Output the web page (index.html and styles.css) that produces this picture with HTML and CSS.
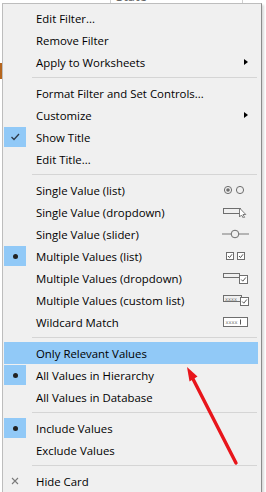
FILE: index.html
```html
<!DOCTYPE html>
<html lang="en">
<head>
    <title>filter menu</title>
    <link rel="stylesheet" href="styles.css">
</head>
<body>
    <div class="page">
        <div class="card-head">
            <span class="field">State</span>
            <span class="close">&times;</span>
        </div>
        <div class="edge"></div>

        <div class="menu">
            <div class="item"><span class="gutter"></span><span class="label">Edit Filter...</span><span class="aux"></span></div>
            <div class="item"><span class="gutter"></span><span class="label">Remove Filter</span><span class="aux"></span></div>
            <div class="item"><span class="gutter"></span><span class="label">Apply to Worksheets</span><span class="aux"><span class="sub"></span></span></div>
            <div class="sep"></div>

            <div class="item"><span class="gutter"></span><span class="label">Format Filter and Set Controls...</span><span class="aux"></span></div>
            <div class="item"><span class="gutter"></span><span class="label">Customize</span><span class="aux"><span class="sub"></span></span></div>
            <div class="item">
                <span class="gutter on">
                    <svg width="22" height="20" viewBox="0 0 22 20"><polyline points="7.5,10 10,12.5 15,7" fill="none" stroke="#2d3b4b" stroke-width="1.3"/></svg>
                </span>
                <span class="label">Show Title</span><span class="aux"></span>
            </div>
            <div class="item"><span class="gutter"></span><span class="label">Edit Title...</span><span class="aux"></span></div>
            <div class="sep"></div>

            <div class="item">
                <span class="gutter"></span><span class="label">Single Value (list)</span>
                <span class="aux">
                    <svg width="28" height="12" viewBox="0 0 28 12">
                        <circle cx="6" cy="6" r="3.6" fill="none" stroke="#6e6e6e"/>
                        <circle cx="6" cy="6" r="1.8" fill="#6e6e6e"/>
                        <circle cx="18" cy="6" r="3.6" fill="none" stroke="#6e6e6e"/>
                    </svg>
                </span>
            </div>
            <div class="item">
                <span class="gutter"></span><span class="label">Single Value (dropdown)</span>
                <span class="aux">
                    <svg width="28" height="12" viewBox="0 0 28 12">
                        <rect x="1.5" y="2.5" width="17" height="5" fill="none" stroke="#6e6e6e"/>
                        <polygon points="17.5,2 17.5,11 19.5,9 21.3,12 22.6,11.3 21,8.5 23.8,8.5" fill="#fff" stroke="#6e6e6e" stroke-width="0.9"/>
                    </svg>
                </span>
            </div>
            <div class="item">
                <span class="gutter"></span><span class="label">Single Value (slider)</span>
                <span class="aux">
                    <svg width="28" height="12" viewBox="0 0 28 12">
                        <line x1="0" y1="6" x2="27" y2="6" stroke="#b4b4b4" stroke-width="2"/>
                        <circle cx="13" cy="6" r="3.8" fill="#f0f0f0" stroke="#6e6e6e"/>
                    </svg>
                </span>
            </div>
            <div class="item">
                <span class="gutter on"><span class="dot"></span></span>
                <span class="label">Multiple Values (list)</span>
                <span class="aux">
                    <svg width="28" height="12" viewBox="0 0 28 12">
                        <rect x="4.5" y="2.5" width="7" height="7" fill="#fff" stroke="#6e6e6e"/>
                        <polyline points="6,6 7.5,7.6 10,4.3" fill="none" stroke="#555"/>
                        <rect x="15.5" y="2.5" width="7" height="7" fill="#fff" stroke="#6e6e6e"/>
                        <polyline points="17,6 18.5,7.6 21,4.3" fill="none" stroke="#555"/>
                    </svg>
                </span>
            </div>
            <div class="item">
                <span class="gutter"></span><span class="label">Multiple Values (dropdown)</span>
                <span class="aux">
                    <svg width="28" height="12" viewBox="0 0 28 12">
                        <rect x="1.5" y="1.5" width="16" height="4" fill="none" stroke="#6e6e6e"/>
                        <rect x="17.5" y="3.5" width="8" height="8" fill="#fff" stroke="#6e6e6e"/>
                        <polyline points="19.2,7.5 20.8,9.2 23.8,5.5" fill="none" stroke="#555"/>
                    </svg>
                </span>
            </div>
            <div class="item">
                <span class="gutter"></span><span class="label">Multiple Values (custom list)</span>
                <span class="aux">
                    <svg width="28" height="12" viewBox="0 0 28 12">
                        <rect x="1.5" y="1.5" width="18" height="6" fill="none" stroke="#6e6e6e"/>
                        <text x="3" y="6.5" font-size="5" font-family="DejaVu Sans" fill="#777">xxxx</text>
                        <rect x="18.5" y="3.5" width="8" height="8" fill="#fff" stroke="#6e6e6e"/>
                        <polyline points="20.2,7.5 21.8,9.2 24.8,5.5" fill="none" stroke="#555"/>
                    </svg>
                </span>
            </div>
            <div class="item">
                <span class="gutter"></span><span class="label">Wildcard Match</span>
                <span class="aux">
                    <svg width="28" height="12" viewBox="0 0 28 12">
                        <rect x="1.5" y="1.5" width="24" height="9" fill="#fff" stroke="#6e6e6e"/>
                        <text x="3.5" y="8" font-size="5" font-family="DejaVu Sans" fill="#777">xxxx</text>
                        <line x1="18.5" y1="3.5" x2="18.5" y2="8.5" stroke="#555"/>
                    </svg>
                </span>
            </div>
            <div class="sep"></div>

            <div class="item hot"><span class="gutter"></span><span class="label">Only Relevant Values</span><span class="aux"></span></div>
            <div class="item"><span class="gutter on"><span class="dot"></span></span><span class="label">All Values in Hierarchy</span><span class="aux"></span></div>
            <div class="item"><span class="gutter"></span><span class="label">All Values in Database</span><span class="aux"></span></div>
            <div class="sep"></div>

            <div class="item"><span class="gutter on"><span class="dot"></span></span><span class="label">Include Values</span><span class="aux"></span></div>
            <div class="item"><span class="gutter"></span><span class="label">Exclude Values</span><span class="aux"></span></div>
            <div class="sep"></div>

            <div class="item">
                <span class="gutter">
                    <svg width="22" height="20" viewBox="0 0 22 20"><path d="M8 7 L14 13 M14 7 L8 13" stroke="#7a7a7a" stroke-width="1.1"/></svg>
                </span>
                <span class="label">Hide Card</span><span class="aux"></span>
            </div>
        </div>

        <!-- red annotation arrow drawn over the menu -->
        <svg class="arrow" width="266" height="492" viewBox="0 0 266 492">
            <line x1="236" y1="463" x2="192" y2="377" stroke="#e8151b" stroke-width="3.4" stroke-linecap="round"/>
            <polygon points="187,367 197.5,376.5 189.5,381.5" fill="#e8151b"/>
        </svg>
    </div>
</body>
</html>
```

FILE: styles.css
```css
*{
    margin: 0;
    padding: 0;
    box-sizing: border-box;
}
body{
    background-color: #ffffff;
    font-family: 'Open Sans', 'Noto Sans', sans-serif;
    font-size: 11.4px;
    color: #000;
}

.page{
    position: relative;
    width: 266px;
    height: 492px;
    overflow: hidden;
}

/* filter card peeking above the menu */
.card-head{
    height: 3px;
    overflow: hidden;
    display: flex;
    color: #666;
}
.field{
    margin-left: 110px;
    padding-left: 5px;
    width: 133px;
    border-left: 1px solid #cfcfcf;
    border-right: 1px solid #cfcfcf;
    font-size: 13px;
    line-height: 13px;
    margin-top: -10px;
}
.close{
    margin-left: -24px;
    color: #d64545;
    font-size: 12px;
    line-height: 12px;
    margin-top: -10px;
}
.edge{
    position: absolute;
    left: 0;
    top: 63px;
    width: 2px;
    height: 16px;
    background-color: #b5651d;
}

.menu{
    width: 260px;
    margin-left: 2px;
    background-color: #f0f0f0;
    border: 1px solid #bdbdbd;
    border-right-color: #8c8c8c;
    padding: 3px 3px 3px 1px;
    box-shadow: 2px 2px 2px rgba(0, 0, 0, 0.15);
}

.item{
    display: grid;
    grid-template-columns: 24px 1fr 28px;
    align-items: center;
    height: 22px;
    padding-right: 8px;
}
.item.hot{
    background-color: #91c9f7;
}
.gutter{
    width: 22px;
    height: 20px;
    display: flex;
    justify-content: center;
    align-items: center;
}
.gutter.on{
    background-color: #91c9f7;
}
.gutter svg{
    display: block;
}
.dot{
    width: 5px;
    height: 5px;
    border-radius: 50%;
    background-color: #222;
}
.label{
    padding-left: 8px;
    white-space: nowrap;
}
.aux{
    display: flex;
    align-items: center;
    height: 12px;
}
.aux svg{
    display: block;
}
.sub{
    margin-left: 22px;
    width: 0;
    height: 0;
    border-top: 3.5px solid transparent;
    border-bottom: 3.5px solid transparent;
    border-left: 4px solid #000;
}

.sep{
    height: 9px;
    display: flex;
    align-items: center;
    padding-left: 28px;
    padding-right: 1px;
}
.sep::before{
    content: "";
    flex: 1;
    border-top: 1px solid #d5d5d5;
}

.arrow{
    position: absolute;
    left: 0;
    top: 0;
}
```
